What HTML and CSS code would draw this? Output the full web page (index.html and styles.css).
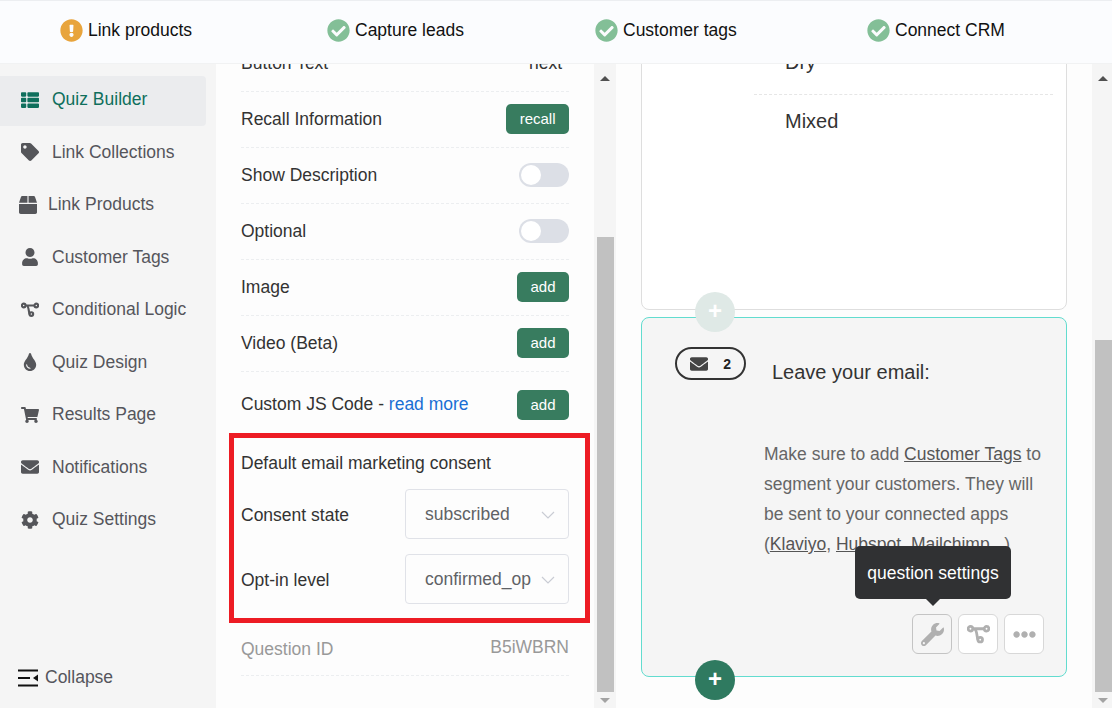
FILE: index.html
```html
<!DOCTYPE html>
<html lang="en">
<head>
<meta charset="utf-8">
<title>Quiz Builder</title>
<link rel="stylesheet" href="styles.css">
</head>
<body>
<svg class="defs" aria-hidden="true">
  <symbol id="i-check" viewBox="0 0 512 512"><path d="M504 256c0 136.967-111.033 248-248 248S8 392.967 8 256 119.033 8 256 8s248 111.033 248 248zM227.314 387.314l184-184c6.248-6.248 6.248-16.379 0-22.627l-22.627-22.627c-6.248-6.249-16.379-6.249-22.628 0L216 308.118l-70.059-70.059c-6.248-6.248-16.379-6.248-22.628 0l-22.627 22.627c-6.248 6.248-6.248 16.379 0 22.627l104 104c6.249 6.249 16.379 6.249 22.628.001z"/></symbol>
  <symbol id="i-warn" viewBox="0 0 512 512"><path d="M504 256c0 136.997-111.043 248-248 248S8 392.997 8 256C8 119.083 119.043 8 256 8s248 111.083 248 248zm-248 50c-25.405 0-46 20.595-46 46s20.595 46 46 46 46-20.595 46-46-20.595-46-46-46zm-43.673-165.346l7.418 136c.347 6.364 5.609 11.346 11.982 11.346h48.546c6.373 0 11.635-4.982 11.982-11.346l7.418-136c.375-6.874-5.098-12.654-11.982-12.654h-63.383c-6.884 0-12.356 5.78-11.981 12.654z"/></symbol>
  <symbol id="i-list" viewBox="0 0 512 512"><path d="M149.333 216v80c0 13.255-10.745 24-24 24H24c-13.255 0-24-10.745-24-24v-80c0-13.255 10.745-24 24-24h101.333c13.255 0 24 10.745 24 24zM0 376v80c0 13.255 10.745 24 24 24h101.333c13.255 0 24-10.745 24-24v-80c0-13.255-10.745-24-24-24H24c-13.255 0-24 10.745-24 24zM125.333 32H24C10.745 32 0 42.745 0 56v80c0 13.255 10.745 24 24 24h101.333c13.255 0 24-10.745 24-24V56c0-13.255-10.745-24-24-24zm80 448H488c13.255 0 24-10.745 24-24v-80c0-13.255-10.745-24-24-24H205.333c-13.255 0-24 10.745-24 24v80c0 13.255 10.745 24 24 24zm-24-424v80c0 13.255 10.745 24 24 24H488c13.255 0 24-10.745 24-24V56c0-13.255-10.745-24-24-24H205.333c-13.255 0-24 10.745-24 24zm24 264H488c13.255 0 24-10.745 24-24v-80c0-13.255-10.745-24-24-24H205.333c-13.255 0-24 10.745-24 24v80c0 13.255 10.745 24 24 24z"/></symbol>
  <symbol id="i-tag" viewBox="0 0 512 512"><path d="M0 252.118V48C0 21.49 21.49 0 48 0h204.118a48 48 0 0 1 33.941 14.059l211.882 211.882c18.745 18.745 18.745 49.137 0 67.882L293.823 497.941c-18.745 18.745-49.137 18.745-67.882 0L14.059 286.059A48 48 0 0 1 0 252.118zM112 64c-26.51 0-48 21.49-48 48s21.49 48 48 48 48-21.49 48-48-21.49-48-48-48z"/></symbol>
  <symbol id="i-box" viewBox="0 0 512 512"><path d="M509.5 184.6L458.9 32.8C452.4 13.2 434.1 0 413.4 0H272v192h238.7c-.4-2.5-.4-5-1.2-7.4zM240 0H98.6c-20.7 0-39 13.2-45.5 32.8L2.5 184.6c-.8 2.4-.8 4.9-1.2 7.4H240V0zM0 224v240c0 26.5 21.5 48 48 48h416c26.5 0 48-21.5 48-48V224H0z"/></symbol>
  <symbol id="i-user" viewBox="0 0 448 512"><path d="M224 256c70.7 0 128-57.3 128-128S294.7 0 224 0 96 57.3 96 128s57.3 128 128 128zm89.6 32h-16.7c-22.2 10.2-46.9 16-72.9 16s-50.6-5.8-72.9-16h-16.7C60.2 288 0 348.2 0 422.4V464c0 26.5 21.5 48 48 48h352c26.5 0 48-21.5 48-48v-41.6c0-74.2-60.2-134.4-134.4-134.4z"/></symbol>
  <symbol id="i-branch" viewBox="0 0 20 20"><g fill="none" stroke="currentColor" stroke-width="2.4"><circle cx="3" cy="5" r="2"/><circle cx="17" cy="5" r="2"/><circle cx="11.5" cy="14.5" r="2"/><path d="M5 5h10M6 5c3 0 2.500 8 3.500 9.500"/></g></symbol>
  <symbol id="i-tint" viewBox="0 0 352 512"><path d="M205.22 22.09c-7.94-28.78-49.44-30.12-58.44 0C100.01 179.85 0 222.72 0 333.91 0 432.35 78.72 512 176 512s176-79.65 176-178.09c0-111.75-99.79-153.34-146.78-311.820zM176 448c-61.750 0-112-50.250-112-112 0-8.840 7.160-16 16-16s16 7.160 16 16c0 44.110 35.890 80 80 80 8.840 0 16 7.160 16 16s-7.160 16-16 16z"/></symbol>
  <symbol id="i-cart" viewBox="0 0 576 512"><path d="M528.12 301.319l47.273-208C578.806 78.301 567.391 64 551.99 64H159.208l-9.166-44.81C147.758 8.021 137.93 0 126.529 0H24C10.745 0 0 10.745 0 24v16c0 13.255 10.745 24 24 24h69.883l70.248 343.435C147.325 417.1 136 435.222 136 456c0 30.928 25.072 56 56 56s56-25.072 56-56c0-15.674-6.447-29.835-16.824-40h209.647C430.447 426.165 424 440.326 424 456c0 30.928 25.072 56 56 56s56-25.072 56-56c0-22.172-12.888-41.332-31.579-50.405l5.517-24.276c3.413-15.018-8.002-29.319-23.403-29.319H218.117l-6.545-32h293.145c11.206 0 20.92-7.754 23.403-18.681z"/></symbol>
  <symbol id="i-mail" viewBox="0 0 512 512"><path d="M502.3 190.8c3.9-3.1 9.7-.2 9.7 4.7V400c0 26.5-21.5 48-48 48H48c-26.5 0-48-21.5-48-48V195.6c0-5 5.7-7.8 9.7-4.7 22.4 17.4 52.1 39.5 154.1 113.6 21.1 15.4 56.7 47.8 92.2 47.6 35.7.3 72-32.8 92.3-47.6 102-74.1 131.6-96.3 154-113.7zM256 320c23.2.4 56.6-29.2 73.4-41.4 132.7-96.3 142.8-104.7 173.4-128.7 5.8-4.5 9.2-11.5 9.2-18.9v-19c0-26.5-21.500-48-48-48H48C21.500 64 0 85.500 0 112v19c0 7.400 3.400 14.300 9.200 18.900 30.600 23.900 40.700 32.400 173.400 128.700 16.800 12.200 50.200 41.800 73.400 41.400z"/></symbol>
  <symbol id="i-cog" viewBox="0 0 512 512"><path d="M487.4 315.7l-42.6-24.6c4.3-23.2 4.3-47 0-70.2l42.6-24.6c4.9-2.8 7.1-8.6 5.5-14-11.1-35.6-30-67.8-54.7-94.6-3.8-4.1-10-5.1-14.8-2.3L380.8 110c-17.9-15.4-38.5-27.3-60.8-35.1V25.8c0-5.6-3.9-10.5-9.4-11.7-36.7-8.2-74.3-7.8-109.2 0-5.5 1.2-9.4 6.1-9.4 11.700V75c-22.200 7.900-42.800 19.800-60.800 35.100L88.700 85.500c-4.900-2.800-11-1.900-14.800 2.300-24.700 26.700-43.600 58.900-54.700 94.600-1.700 5.400.6 11.200 5.500 14L67.300 221c-4.300 23.200-4.300 47 0 70.200l-42.600 24.600c-4.900 2.800-7.100 8.600-5.500 14 11.100 35.600 30 67.800 54.700 94.600 3.800 4.100 10 5.100 14.800 2.300l42.600-24.600c17.900 15.400 38.500 27.300 60.800 35.100v49.200c0 5.600 3.900 10.500 9.400 11.700 36.700 8.200 74.300 7.800 109.200 0 5.500-1.200 9.400-6.100 9.400-11.700v-49.200c22.200-7.900 42.800-19.800 60.800-35.100l42.600 24.600c4.900 2.800 11 1.900 14.800-2.300 24.700-26.700 43.600-58.900 54.700-94.600 1.500-5.500-.7-11.300-5.600-14.100zM256 336c-44.100 0-80-35.900-80-80s35.900-80 80-80 80 35.900 80 80-35.900 80-80 80z"/></symbol>
  <symbol id="i-wrench" viewBox="0 0 512 512"><path d="M507.73 109.1c-2.24-9.03-13.54-12.09-20.12-5.51l-74.36 74.36-67.88-11.31-11.31-67.88 74.36-74.36c6.62-6.62 3.43-17.9-5.66-20.16-47.38-11.74-99.55.91-136.58 37.93-39.64 39.64-50.55 97.1-34.05 147.2L18.74 402.76c-24.99 24.99-24.99 65.51 0 90.5 24.99 24.99 65.51 24.99 90.5 0l213.21-213.21c50.12 16.71 107.47 5.68 147.37-34.22 37.07-37.07 49.7-89.32 37.91-136.73zM64 472c-13.25 0-24-10.75-24-24 0-13.26 10.75-24 24-24s24 10.74 24 24c0 13.25-10.75 24-24 24z"/></symbol>
  <symbol id="i-dots" viewBox="0 0 512 512"><path d="M328 256c0 39.8-32.2 72-72 72s-72-32.2-72-72 32.2-72 72-72 72 32.2 72 72zm104-72c-39.8 0-72 32.2-72 72s32.2 72 72 72 72-32.2 72-72-32.2-72-72-72zm-352 0c-39.8 0-72 32.2-72 72s32.2 72 72 72 72-32.2 72-72-32.2-72-72-72z"/></symbol>
</svg>

<header class="steps">
  <div class="step"><svg class="step-icon warn"><use href="#i-warn"/></svg>Link products</div>
  <div class="step"><svg class="step-icon done"><use href="#i-check"/></svg>Capture leads</div>
  <div class="step"><svg class="step-icon done"><use href="#i-check"/></svg>Customer tags</div>
  <div class="step"><svg class="step-icon done"><use href="#i-check"/></svg>Connect CRM</div>
</header>

<div class="workspace">
  <nav class="sidebar">
    <ul class="nav-list">
      <li class="nav-item active"><svg class="nav-icon"><use href="#i-list"/></svg>Quiz Builder</li>
      <li class="nav-item"><svg class="nav-icon"><use href="#i-tag"/></svg>Link Collections</li>
      <li class="nav-item nav-tight"><svg class="nav-icon"><use href="#i-box"/></svg>Link Products</li>
      <li class="nav-item"><svg class="nav-icon"><use href="#i-user"/></svg>Customer Tags</li>
      <li class="nav-item"><svg class="nav-icon"><use href="#i-branch"/></svg>Conditional Logic</li>
      <li class="nav-item"><svg class="nav-icon"><use href="#i-tint"/></svg>Quiz Design</li>
      <li class="nav-item"><svg class="nav-icon"><use href="#i-cart"/></svg>Results Page</li>
      <li class="nav-item"><svg class="nav-icon"><use href="#i-mail"/></svg>Notifications</li>
      <li class="nav-item"><svg class="nav-icon"><use href="#i-cog"/></svg>Quiz Settings</li>
    </ul>
    <div class="collapse">
      <svg class="collapse-icon" viewBox="0 0 20 18"><path d="M0 1.500h20M0 9h12M0 16.500h20" stroke="#111" stroke-width="2" fill="none"/><path d="M20 5.500v7L15 9z" fill="#111"/></svg>
      Collapse
    </div>
  </nav>

  <section class="settings">
    <div class="settings-inner">
      <div class="row"><span>Button Text</span><span class="row-value">next</span></div>
      <div class="row"><span>Recall Information</span><button class="btn">recall</button></div>
      <div class="row"><span>Show Description</span><span class="toggle"><span class="knob"></span></span></div>
      <div class="row"><span>Optional</span><span class="toggle"><span class="knob"></span></span></div>
      <div class="row"><span>Image</span><button class="btn">add</button></div>
      <div class="row"><span>Video (Beta)</span><button class="btn">add</button></div>
      <div class="row row-js"><span>Custom JS Code - <a class="link">read more</a></span><button class="btn">add</button></div>
      <div class="consent">
        <div class="consent-title">Default email marketing consent</div>
        <div class="field"><span class="field-label">Consent state</span><div class="select"><span class="select-value">subscribed</span><svg class="chev" viewBox="0 0 14 8"><path d="M1 1l6 6 6-6" fill="none" stroke="#c9ccd4" stroke-width="1.200"/></svg></div></div>
        <div class="field"><span class="field-label">Opt-in level</span><div class="select"><span class="select-value">confirmed_op</span><svg class="chev" viewBox="0 0 14 8"><path d="M1 1l6 6 6-6" fill="none" stroke="#c9ccd4" stroke-width="1.200"/></svg></div></div>
      </div>
      <div class="row row-id"><span>Question ID</span><span class="id-value">B5iWBRN</span></div>
    </div>
  </section>
  <div class="scrollbar"><span class="arrow up"></span><span class="thumb thumb-left"></span><span class="arrow down"></span></div>

  <section class="preview">
    <div class="preview-inner">
      <div class="card card-options">
        <div class="option">Dry</div>
        <div class="option option-last">Mixed</div>
      </div>
      <div class="card card-email">
        <button class="add-circle pale">+</button>
        <div class="question-head">
          <div class="badge"><svg class="badge-icon"><use href="#i-mail"/></svg><b>2</b></div>
          <div class="question-title">Leave your email:</div>
        </div>
        <p class="question-text">Make sure to add <u>Customer Tags</u> to segment your customers. They will be sent to your connected apps (<u>Klaviyo</u>, <u>Hubspot</u>, <u>Mailchimp</u>...)</p>
        <div class="actions">
          <div class="tooltip">question settings</div>
          <span class="action hover"><svg><use href="#i-wrench"/></svg></span>
          <span class="action"><svg class="action-branch"><use href="#i-branch"/></svg></span>
          <span class="action"><svg><use href="#i-dots"/></svg></span>
        </div>
        <button class="add-circle solid">+</button>
      </div>
    </div>
  </section>
  <div class="scrollbar"><span class="arrow up"></span><span class="thumb thumb-right"></span><span class="arrow down"></span></div>
</div>
</body>
</html>
```

FILE: styles.css
```css
* { box-sizing: border-box; }

html, body { height: 100%; }

body {
  margin: 0;
  height: 708px;
  overflow: hidden;
  display: flex;
  flex-direction: column;
  font-family: "Liberation Sans", Arial, sans-serif;
  font-size: 17.5px;
  color: #333;
  background: #fdfdfd;
}

.defs { display: none; }

.steps {
  flex: none;
  height: 64px;
  display: grid;
  grid-template-columns: 267px 268px 272px 1fr;
  align-items: center;
  padding: 0 0 4px 60px;
  background: #fbfcfe;
  border-top: 1px solid #eceef1;
  border-bottom: 1px solid #f1f2f3;
  color: #111;
  line-height: 24px;
}

.step { display: flex; align-items: center; gap: 5px; }

.step-icon { width: 23px; height: 23px; fill: #83bf97; }
.step-icon.warn { fill: #e8a43c; }

.workspace { flex: 1; min-height: 0; display: flex; }

.sidebar {
  flex: none;
  width: 216px;
  display: flex;
  flex-direction: column;
  background: #f5f5f5;
  color: #55565c;
}

.nav-list {
  list-style: none;
  margin: 0;
  padding: 12px 10px 0 0;
}

.nav-item {
  height: 50px;
  margin-bottom: 2.500px;
  padding: 0 0 3px 21px;
  display: flex;
  align-items: center;
  gap: 13px;
  border-radius: 0 4px 4px 0;
}

.nav-item.active { background: #ebecee; color: #0f6f5c; }
.nav-item.active .nav-icon { fill: #0f6f5c; color: #0f6f5c; }
.nav-tight { padding-left: 19px; gap: 11px; }

.nav-icon { flex: none; width: 18px; height: 18px; fill: #55565a; color: #55565a; }

.collapse {
  margin-top: auto;
  padding: 0 0 10px 18px;
  height: 51px;
  display: flex;
  align-items: center;
  gap: 7px;
  color: #55565c;
}

.collapse-icon { width: 20px; height: 18px; }

.settings {
  flex: none;
  width: 378px;
  overflow: hidden;
  background: #fdfdfd;
}

.settings-inner { margin-top: -28px; padding: 0 25px; }

.row {
  height: 56px;
  display: flex;
  align-items: center;
  justify-content: space-between;
  border-bottom: 1px dashed #eceef0;
}

.row-value { margin-right: 7px; }

.row .btn, .row .toggle { margin-top: -2px; }
.row-js { height: 61px; padding-top: 4px; border-bottom: 0; }
.row.row-js .btn { margin-top: 0; }
.row-id { height: 53px; color: #999; }
.id-value { margin-top: -4px; }

.link { color: #1a6fd4; }

.btn {
  height: 30px;
  padding: 0 13.500px;
  border: 0;
  border-radius: 5px;
  background: #387c5f;
  color: #fff;
  font: 15px "Liberation Sans", Arial, sans-serif;
}

.toggle {
  width: 50px;
  height: 24px;
  padding: 2px;
  border-radius: 12px;
  background: #dcdfe6;
}

.knob {
  display: block;
  width: 20px;
  height: 20px;
  border-radius: 50%;
  background: #fff;
}

.consent {
  margin: 0 -21px 0 -12px;
  height: 190px;
  padding: 10px 16px 0 7px;
  border: 5px solid #ed1c24;
}

.consent-title { line-height: 30px; margin-bottom: 11px; }

.field {
  display: flex;
  align-items: center;
  justify-content: space-between;
  margin-bottom: 15px;
}

.field-label { margin-top: 2px; }

.select {
  width: 164px;
  height: 50px;
  padding: 0 13px 0 19px;
  display: flex;
  align-items: center;
  justify-content: space-between;
  border: 1px solid #e0e2e8;
  border-radius: 4px;
  color: #606266;
}

.select-value { white-space: nowrap; }

.chev { flex: none; width: 14px; height: 8px; margin-top: 1px; }

.scrollbar {
  flex: none;
  width: 22px;
  display: flex;
  flex-direction: column;
  align-items: center;
  padding: 12px 2px 0;
  background: #f5f5f5;
}

.arrow { flex: none; width: 0; height: 0; border-left: 5px solid transparent; border-right: 5px solid transparent; }
.arrow.up { border-bottom: 5px solid #505050; }
.arrow.down { margin-top: 6px; border-top: 5px solid #a3a3a3; }

.thumb { flex: none; width: 17px; background: #c1c1c1; margin-left: 1px; }
.thumb-left { margin-top: 156px; height: 455px; }
.thumb-right { margin-top: 259px; height: 352px; }

.preview { flex: none; width: 476px; overflow: hidden; background: #fdfdfd; }

.preview-inner { margin-top: -42px; padding: 0 25px; }

.card { position: relative; border-radius: 8px; }

.card-options {
  height: 288px;
  padding: 0 13px 0 112px;
  margin-bottom: 7px;
  background: #fff;
  border: 1px solid #dedede;
}

.option {
  height: 52px;
  padding-left: 31px;
  display: flex;
  align-items: center;
  font-size: 20px;
  border-bottom: 1px dashed #e6e6e6;
}

.option:first-child { height: 72px; align-items: flex-end; padding-bottom: 20px; }
.option-last { border-bottom: 0; }

.card-email {
  height: 360px;
  background: #f5f5f5;
  border: 1px solid #62dccf;
}

.add-circle {
  position: absolute;
  left: 53px;
  width: 40px;
  height: 40px;
  padding: 0 0 2px;
  border: 0;
  border-radius: 50%;
  color: #fff;
  font: bold 24px/38px "Liberation Sans", Arial, sans-serif;
}

.add-circle.pale { top: -26px; background: #dfe9e6; }
.add-circle.solid { bottom: -24px; background: #2f7a60; }

.question-head {
  display: flex;
  align-items: flex-start;
  gap: 26px;
  padding: 30px 0 0 33px;
}

.badge {
  width: 71px;
  height: 33px;
  margin-top: -1px;
  padding: 0 13px;
  display: flex;
  align-items: center;
  justify-content: space-between;
  border: 2px solid #333;
  border-radius: 17px;
  font-size: 14px;
  color: #222;
}

.badge-icon { width: 18px; height: 18px; fill: #444; }

.question-title { margin-top: 12px; font-size: 20px; line-height: 24px; }

.question-text {
  margin: 55px 22px 0 122px;
  line-height: 30px;
  color: #666;
}

.question-text u { color: #555; }

.actions {
  position: absolute;
  right: 22px;
  bottom: 22px;
  display: flex;
  gap: 6px;
}

.action {
  width: 40px;
  height: 40px;
  display: flex;
  align-items: center;
  justify-content: center;
  background: #fff;
  border: 1px solid #d8d8d8;
  border-radius: 6px;
  fill: #b0b0b0;
  color: #b0b0b0;
}

.action svg { width: 23px; height: 23px; }
.action.hover { background: #f5f5f5; border-color: #c4c4c4; }

.tooltip {
  position: absolute;
  left: -57px;
  bottom: 55px;
  width: 156px;
  height: 53px;
  padding-top: 2px;
  display: flex;
  align-items: center;
  justify-content: center;
  border-radius: 5px;
  background: #303133;
  color: #fff;
}

.tooltip::after {
  content: "";
  position: absolute;
  left: 71px;
  top: 100%;
  border: 7px solid transparent;
  border-top-color: #303133;
  border-bottom: 0;
}
```
